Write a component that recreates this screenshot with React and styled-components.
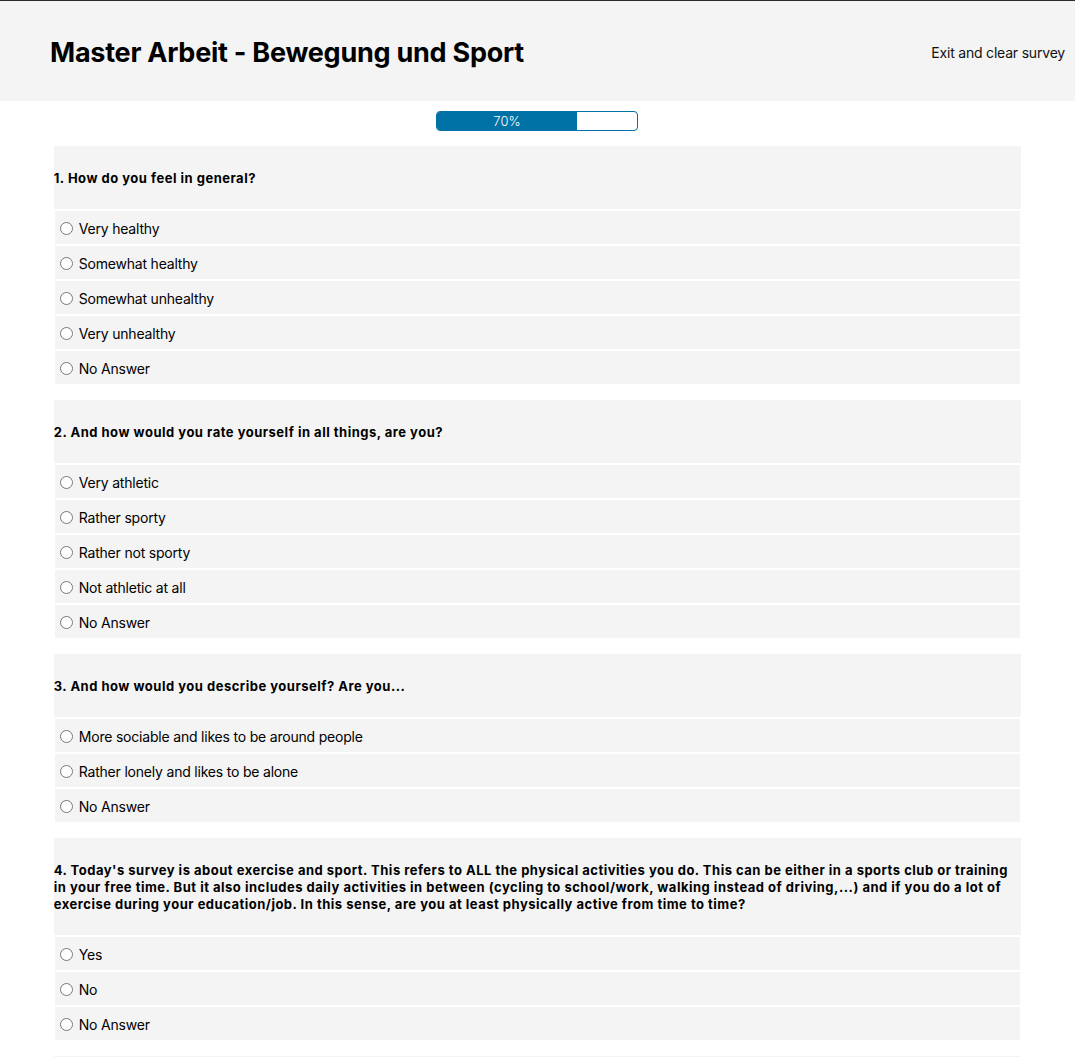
import React from "react";
import styled, { createGlobalStyle } from "styled-components";

const GlobalStyle = createGlobalStyle`
  body {
    margin: 0;
    font-family: Inter, "Noto Sans", "Liberation Sans", sans-serif;
    color: #000;
    background: #fff;
  }
`;

const questions = [
  {
    title: "1. How do you feel in general?",
    options: [
      "Very healthy",
      "Somewhat healthy",
      "Somewhat unhealthy",
      "Very unhealthy",
      "No Answer",
    ],
  },
  {
    title: "2. And how would you rate yourself in all things, are you?",
    options: [
      "Very athletic",
      "Rather sporty",
      "Rather not sporty",
      "Not athletic at all",
      "No Answer",
    ],
  },
  {
    title: "3. And how would you describe yourself? Are you...",
    options: [
      "More sociable and likes to be around people",
      "Rather lonely and likes to be alone",
      "No Answer",
    ],
  },
  {
    title:
      "4. Today's survey is about exercise and sport. This refers to ALL the physical activities you do. This can be either in a sports club or training in your free time. But it also includes daily activities in between (cycling to school/work, walking instead of driving,...) and if you do a lot of exercise during your education/job. In this sense, are you at least physically active from time to time?",
    options: ["Yes", "No", "No Answer"],
  },
  {
    title: "5. How many days a week are you physically active?",
    options: ["Every day", "Several times a week", "Once a week", "No Answer"],
  },
];

function App() {
  const progress = 70;

  return (
    <>
      <GlobalStyle />
      <Header>
        <Title>Master Arbeit - Bewegung und Sport</Title>
        <ExitLink href="#">Exit and clear survey</ExitLink>
      </Header>
      <ProgressWrap>
        <ProgressBar>
          <ProgressFill style={{ width: `${progress}%` }}>{progress}%</ProgressFill>
        </ProgressBar>
      </ProgressWrap>
      <Main>
        {questions.map((q, qi) => (
          <QuestionBlock key={qi}>
            <QuestionTitle>{q.title}</QuestionTitle>
            {q.options.map((opt, oi) => (
              <OptionRow key={oi}>
                <Radio type="radio" name={`q${qi}`} />
                {opt}
              </OptionRow>
            ))}
          </QuestionBlock>
        ))}
      </Main>
    </>
  );
}

export default App;

const Header = styled.header`
  box-sizing: border-box;
  height: 101px;
  border-top: 1px solid #2b2b2b;
  background-color: #f4f4f4;
  display: flex;
  align-items: center;
  justify-content: space-between;
  padding: 2px 10px 0 50px;
`;

const Title = styled.h1`
  margin: 0;
  font-size: 27px;
  font-weight: 700;
  letter-spacing: -0.25px;
`;

const ExitLink = styled.a`
  color: #111;
  text-decoration: none;
  font-size: 14px;
  letter-spacing: -0.2px;
`;

const ProgressWrap = styled.div`
  display: flex;
  justify-content: center;
  padding: 10px 1px 15px 0;
`;

const ProgressBar = styled.div`
  width: 200px;
  height: 18px;
  border: 1px solid #0071a4;
  border-radius: 4px;
  background: #fff;
  overflow: hidden;
`;

const ProgressFill = styled.div`
  height: 100%;
  background-color: #0071a4;
  color: #fff;
  font-size: 13px;
  font-weight: 300;
  line-height: 18px;
  text-align: center;
`;

const Main = styled.main`
  width: 90%;
  margin: 0 auto;
`;

const QuestionBlock = styled.section`
  margin-bottom: 16px;
`;

const QuestionTitle = styled.div`
  background-color: #f4f4f4;
  padding: 24px 0 22px;
  font-size: 13px;
  line-height: 17px;
  font-weight: 700;
  letter-spacing: 0.5px;
`;

const OptionRow = styled.label`
  display: flex;
  align-items: center;
  box-sizing: border-box;
  height: 33px;
  padding-top: 2px;
  margin: 2px 1px 0;
  background-color: #f4f4f4;
  font-size: 14px;
  letter-spacing: -0.2px;
`;

const Radio = styled.input`
  width: 13px;
  height: 13px;
  margin: 0 6px 0 5px;
`;
